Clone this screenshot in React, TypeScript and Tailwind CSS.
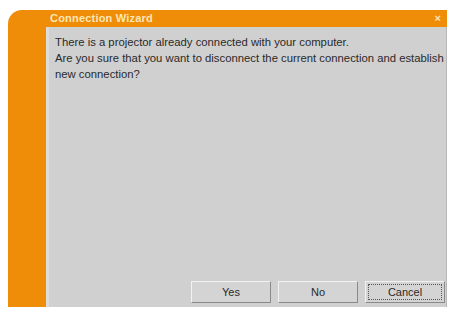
export default function App() {
    const buttons = ["Yes", "No", "Cancel"];

    return (
        <div className="w-[451px] h-[309px] bg-white overflow-hidden font-['Liberation_Sans',Arial,sans-serif]">
            <div className="ml-[8px] mt-[10px] w-[439px] h-[297px] bg-[#ef8c08] rounded-tl-[14px] flex flex-col">
                {/* title bar */}
                <div className="h-[17px] flex items-center pl-[42px] pr-[6px]">
                    <span className="text-[11px] font-bold text-[#fbe7b4] leading-none tracking-[0.2px]">
                        Connection Wizard
                    </span>
                    <span className="ml-auto text-[11px] font-bold text-[#fbe7b4] leading-none">×</span>
                </div>
                <div className="flex-1 flex">
                    <div className="w-[38px]" />
                    {/* body */}
                    <div className="flex-1 bg-[#d0d0d0] border-l-[3px] border-[#dcdcdc] border-r border-r-[#b8b8b8] flex flex-col pl-[6px]">
                        <p className="mt-[7px] text-[11.3px] leading-[16px] text-[#2a2a2a]">
                            There is a projector already connected with your computer.
                            <br />
                            Are you sure that you want to disconnect the current connection and establish
                            <br />
                            new connection?
                        </p>
                        <div className="mt-auto mb-[4px] flex justify-end gap-[7px] pr-[1px]">
                            {buttons.map((b) => (
                                <div
                                    key={b}
                                    className="w-[80px] h-[22px] bg-[#d4d4d4] border border-t-[#f2f2f2] border-l-[#f2f2f2] border-b-[#8a8a8a] border-r-[#8a8a8a] flex items-center justify-center p-[2px]"
                                >
                                    <span
                                        className={
                                            b === "Cancel"
                                                ? "w-full h-full flex items-center justify-center border border-dotted border-[#555] text-[11px] text-[#2a2a2a]"
                                                : "text-[11px] text-[#2a2a2a]"
                                        }
                                    >
                                        {b}
                                    </span>
                                </div>
                            ))}
                        </div>
                    </div>
                </div>
            </div>
        </div>
    );
}
